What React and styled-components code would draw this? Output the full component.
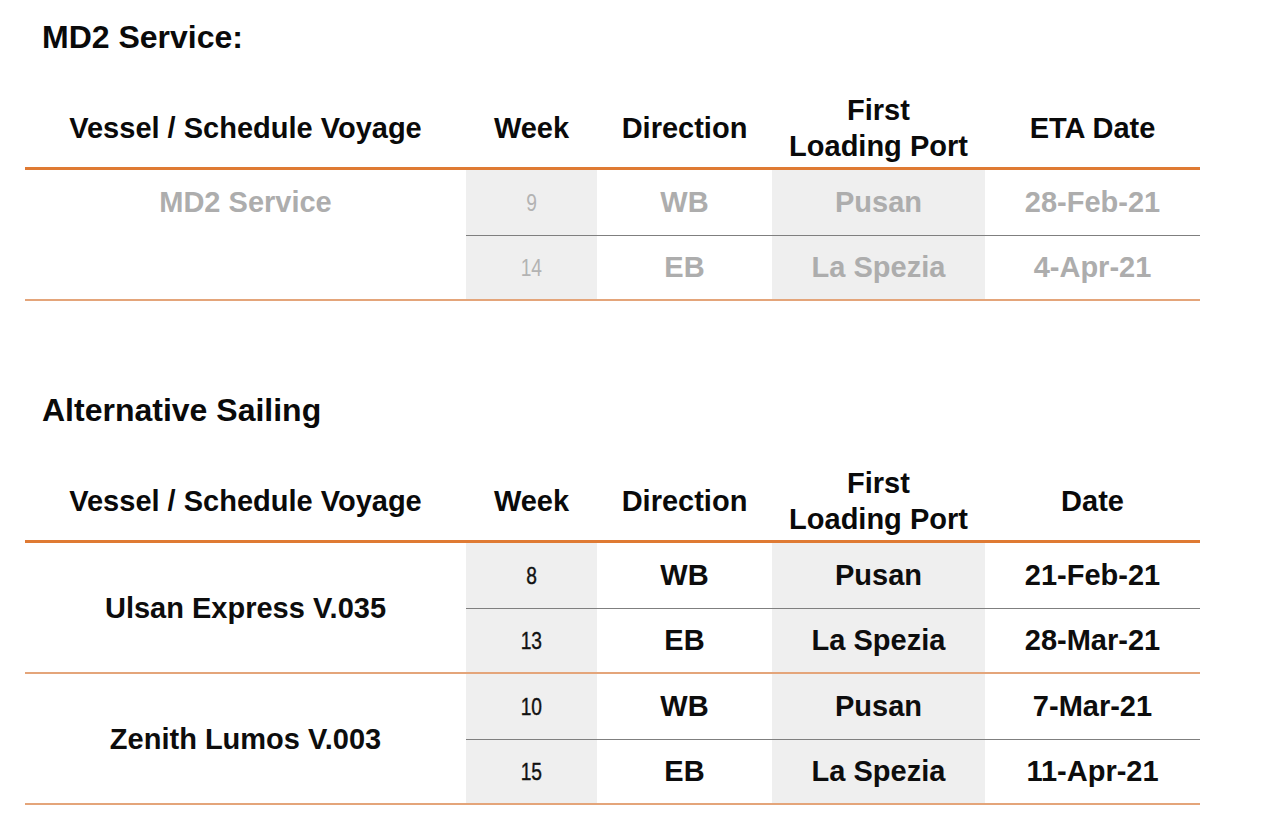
import React from 'react';
import styled, { createGlobalStyle } from 'styled-components';

const GlobalStyle = createGlobalStyle`
    body {
        margin: 0;
        background: #fff;
        font-family: "Liberation Sans", Arial, sans-serif;
        color: #111;
    }
`

const md2Rows = [
    {
        vessel: 'MD2 Service',
        legs: [
            { week: '9', dir: 'WB', port: 'Pusan', date: '28-Feb-21' },
            { week: '14', dir: 'EB', port: 'La Spezia', date: '4-Apr-21' },
        ],
    },
]

const altRows = [
    {
        vessel: 'Ulsan Express V.035',
        legs: [
            { week: '8', dir: 'WB', port: 'Pusan', date: '21-Feb-21' },
            { week: '13', dir: 'EB', port: 'La Spezia', date: '28-Mar-21' },
        ],
    },
    {
        vessel: 'Zenith Lumos V.003',
        legs: [
            { week: '10', dir: 'WB', port: 'Pusan', date: '7-Mar-21' },
            { week: '15', dir: 'EB', port: 'La Spezia', date: '11-Apr-21' },
        ],
    },
]

const ScheduleTable = ({ dateLabel, groups, muted, vesselTop }) => (
    <Table>
        <HeadCell>Vessel / Schedule Voyage</HeadCell>
        <HeadCell>Week</HeadCell>
        <HeadCell>Direction</HeadCell>
        <HeadCell>First<br />Loading Port</HeadCell>
        <HeadCell>{dateLabel}</HeadCell>
        {groups.map((group) => (
            <React.Fragment key={group.vessel}>
                <VesselCell $top={vesselTop} $muted={muted}>{group.vessel}</VesselCell>
                {group.legs.map((leg, i) => {
                    const divider = i === group.legs.length - 1 ? 'group' : 'row'
                    return (
                        <React.Fragment key={leg.week}>
                            <Cell $shade $muted={muted} $divider={divider}>
                                <WeekNum $muted={muted}>{leg.week}</WeekNum>
                            </Cell>
                            <Cell $muted={muted} $divider={divider}>{leg.dir}</Cell>
                            <Cell $shade $muted={muted} $divider={divider}>{leg.port}</Cell>
                            <Cell $muted={muted} $divider={divider}>{leg.date}</Cell>
                        </React.Fragment>
                    )
                })}
            </React.Fragment>
        ))}
    </Table>
)

const App = () => {
    return (
        <Page>
            <GlobalStyle />
            <Section>
                <Title>MD2 Service:</Title>
                <ScheduleTable dateLabel="ETA Date" groups={md2Rows} muted vesselTop />
            </Section>
            <Section $gap>
                <Title>Alternative Sailing</Title>
                <ScheduleTable dateLabel="Date" groups={altRows} />
            </Section>
        </Page>
    )
}

const Page = styled.div`
    padding: 19px 0 0 25px;
    width: 1175px;
`

const Section = styled.section`
    margin-top: ${(p) => (p.$gap ? '91px' : '0')};
`

const Title = styled.h2`
    margin: 0 0 33px 17px;
    font-size: 32px;
    line-height: 36px;
    font-weight: 700;
    color: #0a0a0a;
`

const Table = styled.div`
    display: grid;
    grid-template-columns: 441px 131px 175px 213px 215px;
`

const HeadCell = styled.div`
    display: flex;
    align-items: center;
    justify-content: center;
    text-align: center;
    padding: 4px 0 3px;
    min-height: 72px;
    font-size: 29px;
    line-height: 36px;
    font-weight: 700;
    color: #0a0a0a;
    border-bottom: 3px solid #df7a33;
`

const VesselCell = styled.div`
    grid-row: span 2;
    display: flex;
    align-items: ${(p) => (p.$top ? 'flex-start' : 'center')};
    justify-content: center;
    padding-top: ${(p) => (p.$top ? '14px' : '0')};
    font-size: 29px;
    line-height: 36px;
    font-weight: 700;
    color: ${(p) => (p.$muted ? '#adadad' : '#0d0d0d')};
    border-bottom: 2px solid #e4a57a;
`

const Cell = styled.div`
    display: flex;
    align-items: center;
    justify-content: center;
    height: ${(p) => (p.$divider === 'group' ? '63px' : '65px')};
    background: ${(p) => (p.$shade ? '#efefef' : '#fff')};
    border-bottom: ${(p) => (p.$divider === 'group' ? '2px solid #e4a57a' : '1px solid #7f7f7f')};
    font-size: 29px;
    font-weight: 700;
    color: ${(p) => (p.$muted ? '#adadad' : '#0d0d0d')};
`

const WeekNum = styled.span`
    display: inline-block;
    font-size: 24px;
    font-weight: 400;
    transform: scaleX(0.8);
    -webkit-text-stroke: ${(p) => (p.$muted ? '0' : '0.4px')};
    color: ${(p) => (p.$muted ? '#b3b3b3' : '#111')};
`

export default App;
